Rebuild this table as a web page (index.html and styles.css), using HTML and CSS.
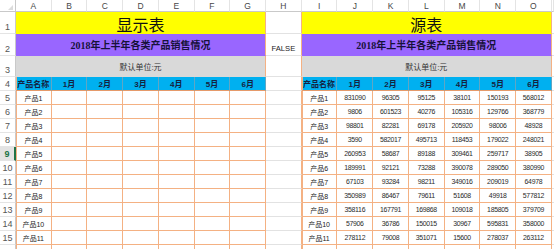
FILE: index.html
```html
<!DOCTYPE html>
<html lang="zh">
<head>
<meta charset="utf-8">
<title>显示表</title>
<link rel="stylesheet" href="styles.css">
</head>
<body>
<div class="sheet">
  <!-- column headers -->
  <div class="c ch corner"></div>
  <div class="c ch">A</div><div class="c ch">B</div><div class="c ch">C</div><div class="c ch">D</div><div class="c ch">E</div><div class="c ch">F</div><div class="c ch">G</div><div class="c ch">H</div><div class="c ch">I</div><div class="c ch">J</div><div class="c ch">K</div><div class="c ch">L</div><div class="c ch">M</div><div class="c ch">N</div><div class="c ch">O</div><div class="c ch"></div>

  <!-- row 1 -->
  <div class="c rh">1</div>
  <div class="c m title">显示表</div>
  <div class="c h"></div>
  <div class="c m title">源表</div>
  <div class="c x"></div>

  <!-- row 2 -->
  <div class="c rh">2</div>
  <div class="c m sub">2018年上半年各类产品销售情况</div>
  <div class="c h bool">FALSE</div>
  <div class="c m sub">2018年上半年各类产品销售情况</div>
  <div class="c x"></div>

  <!-- row 3 -->
  <div class="c rh">3</div>
  <div class="c m unit">默认单位:元</div>
  <div class="c h"></div>
  <div class="c m unit">默认单位:元</div>
  <div class="c x"></div>

  <!-- row 4 -->
  <div class="c rh">4</div>
  <div class="c t a hd">产品名称</div><div class="c t hd">1月</div><div class="c t hd">2月</div><div class="c t hd">3月</div><div class="c t hd">4月</div><div class="c t hd">5月</div><div class="c t hd">6月</div>
  <div class="c h"></div>
  <div class="c t a hd">产品名称</div><div class="c t hd">1月</div><div class="c t hd">2月</div><div class="c t hd">3月</div><div class="c t hd">4月</div><div class="c t hd">5月</div><div class="c t hd">6月</div>
  <div class="c x"></div>

  <!-- row 5 -->
  <div class="c rh">5</div>
  <div class="c t a pn">产品1</div><div class="c t"></div><div class="c t"></div><div class="c t"></div><div class="c t"></div><div class="c t"></div><div class="c t"></div>
  <div class="c h"></div>
  <div class="c t a pn">产品1</div><div class="c t n">831090</div><div class="c t n">96305</div><div class="c t n">95125</div><div class="c t n">38101</div><div class="c t n">150193</div><div class="c t n">568012</div>
  <div class="c x"></div>

  <!-- row 6 -->
  <div class="c rh">6</div>
  <div class="c t a pn">产品2</div><div class="c t"></div><div class="c t"></div><div class="c t"></div><div class="c t"></div><div class="c t"></div><div class="c t"></div>
  <div class="c h"></div>
  <div class="c t a pn">产品2</div><div class="c t n">9806</div><div class="c t n">601523</div><div class="c t n">40276</div><div class="c t n">105316</div><div class="c t n">129766</div><div class="c t n">368779</div>
  <div class="c x"></div>

  <!-- row 7 -->
  <div class="c rh">7</div>
  <div class="c t a pn">产品3</div><div class="c t"></div><div class="c t"></div><div class="c t"></div><div class="c t"></div><div class="c t"></div><div class="c t"></div>
  <div class="c h"></div>
  <div class="c t a pn">产品3</div><div class="c t n">98801</div><div class="c t n">82281</div><div class="c t n">69178</div><div class="c t n">205920</div><div class="c t n">98006</div><div class="c t n">48928</div>
  <div class="c x"></div>

  <!-- row 8 -->
  <div class="c rh">8</div>
  <div class="c t a pn">产品4</div><div class="c t"></div><div class="c t"></div><div class="c t"></div><div class="c t"></div><div class="c t"></div><div class="c t"></div>
  <div class="c h"></div>
  <div class="c t a pn">产品4</div><div class="c t n">3590</div><div class="c t n">582017</div><div class="c t n">495713</div><div class="c t n">118453</div><div class="c t n">179022</div><div class="c t n">248021</div>
  <div class="c x"></div>

  <!-- row 9 (selected row) -->
  <div class="c rh sel">9</div>
  <div class="c t a pn">产品5</div><div class="c t"></div><div class="c t"></div><div class="c t"></div><div class="c t"></div><div class="c t"></div><div class="c t"></div>
  <div class="c h"></div>
  <div class="c t a pn">产品5</div><div class="c t n">260953</div><div class="c t n">58687</div><div class="c t n">89188</div><div class="c t n">309461</div><div class="c t n">259717</div><div class="c t n">38905</div>
  <div class="c x"></div>

  <!-- row 10 -->
  <div class="c rh">10</div>
  <div class="c t a pn">产品6</div><div class="c t"></div><div class="c t"></div><div class="c t"></div><div class="c t"></div><div class="c t"></div><div class="c t"></div>
  <div class="c h"></div>
  <div class="c t a pn">产品6</div><div class="c t n">189991</div><div class="c t n">92121</div><div class="c t n">73288</div><div class="c t n">390078</div><div class="c t n">289050</div><div class="c t n">380990</div>
  <div class="c x"></div>

  <!-- row 11 -->
  <div class="c rh">11</div>
  <div class="c t a pn">产品7</div><div class="c t"></div><div class="c t"></div><div class="c t"></div><div class="c t"></div><div class="c t"></div><div class="c t"></div>
  <div class="c h"></div>
  <div class="c t a pn">产品7</div><div class="c t n">67103</div><div class="c t n">93284</div><div class="c t n">98211</div><div class="c t n">349016</div><div class="c t n">209019</div><div class="c t n">64978</div>
  <div class="c x"></div>

  <!-- row 12 -->
  <div class="c rh">12</div>
  <div class="c t a pn">产品8</div><div class="c t"></div><div class="c t"></div><div class="c t"></div><div class="c t"></div><div class="c t"></div><div class="c t"></div>
  <div class="c h"></div>
  <div class="c t a pn">产品8</div><div class="c t n">350989</div><div class="c t n">86467</div><div class="c t n">79611</div><div class="c t n">51608</div><div class="c t n">49918</div><div class="c t n">577812</div>
  <div class="c x"></div>

  <!-- row 13 -->
  <div class="c rh">13</div>
  <div class="c t a pn">产品9</div><div class="c t"></div><div class="c t"></div><div class="c t"></div><div class="c t"></div><div class="c t"></div><div class="c t"></div>
  <div class="c h"></div>
  <div class="c t a pn">产品9</div><div class="c t n">358116</div><div class="c t n">167791</div><div class="c t n">169868</div><div class="c t n">109018</div><div class="c t n">185805</div><div class="c t n">379709</div>
  <div class="c x"></div>

  <!-- row 14 -->
  <div class="c rh">14</div>
  <div class="c t a pn">产品10</div><div class="c t"></div><div class="c t"></div><div class="c t"></div><div class="c t"></div><div class="c t"></div><div class="c t"></div>
  <div class="c h"></div>
  <div class="c t a pn">产品10</div><div class="c t n">57906</div><div class="c t n">36786</div><div class="c t n">150015</div><div class="c t n">30967</div><div class="c t n">595831</div><div class="c t n">358000</div>
  <div class="c x"></div>

  <!-- row 15 -->
  <div class="c rh">15</div>
  <div class="c t a pn">产品11</div><div class="c t"></div><div class="c t"></div><div class="c t"></div><div class="c t"></div><div class="c t"></div><div class="c t"></div>
  <div class="c h"></div>
  <div class="c t a pn">产品11</div><div class="c t n">278112</div><div class="c t n">79008</div><div class="c t n">351071</div><div class="c t n">15600</div><div class="c t n">278037</div><div class="c t n">263112</div>
  <div class="c x"></div>

  <!-- row 16 (cut off by the window) -->
  <div class="c rh"></div>
  <div class="c t a"></div><div class="c t"></div><div class="c t"></div><div class="c t"></div><div class="c t"></div><div class="c t"></div><div class="c t"></div>
  <div class="c h"></div>
  <div class="c t a"></div><div class="c t"></div><div class="c t"></div><div class="c t"></div><div class="c t"></div><div class="c t"></div><div class="c t"></div>
  <div class="c x"></div>
</div>
</body>
</html>
```

FILE: styles.css
```css
* {
  box-sizing: border-box;
  margin: 0;
  padding: 0;
}

html, body {
  background: #ffffff;
}

body {
  width: 554px;
  height: 249px;
  overflow: hidden;
  font-family: "Liberation Sans", "Noto Sans CJK SC", sans-serif;
  color: #222222;
}

.sheet {
  display: grid;
  grid-template-columns: 16px repeat(15, 35.73px) 1fr;
  grid-template-rows: 12px 22px 22px 21px 14px repeat(12, 14px);
}

.c {
  display: flex;
  align-items: center;
  justify-content: center;
  overflow: hidden;
  white-space: nowrap;
  border-right: 1px solid #e2e2e2;
  border-bottom: 1px solid #e2e2e2;
}

/* column header row */
.ch {
  font-size: 8.5px;
  color: #474747;
  border-bottom-color: #c9c9c9;
  border-right-color: #e4e4e4;
}

.corner {
  position: relative;
  border-right-color: #c9c9c9;
}

.corner::after {
  content: "";
  position: absolute;
  right: 2px;
  bottom: 1px;
  width: 0;
  height: 0;
  border-left: 5px solid transparent;
  border-bottom: 5px solid #dcdcdc;
}

/* row header column */
.rh {
  font-size: 9px;
  color: #555555;
  align-items: flex-end;
  padding-bottom: 1px;
  border-right-color: #c9c9c9;
  border-bottom-color: #e4e4e4;
}

.rh.sel {
  background: #e3e3e3;
  color: #217346;
  font-weight: bold;
  border-right: 2px solid #217346;
}

/* merged title cells */
.m {
  grid-column: span 7;
  border-right-color: #f4b183;
}

.title {
  background: #ffff00;
  border-bottom-color: #ffff00;
  font-family: "Noto Sans CJK SC", sans-serif;
  font-weight: 400;
  font-size: 16px;
  color: #111111;
  padding-top: 2px;
}

.sub {
  background: #9966ff;
  border-bottom-color: #9966ff;
  font-family: "Liberation Serif", "Noto Sans CJK SC", serif;
  font-weight: bold;
  font-size: 10px;
  color: #17123a;
}

.unit {
  background: #d9d9d9;
  border-bottom-color: #d9d9d9;
  font-size: 8px;
  color: #333333;
}

/* H column */
.h {
  border-right-color: #f4b183;
}

.bool {
  font-size: 7.6px;
  color: #222222;
  align-items: flex-end;
  padding-bottom: 2px;
}

/* right edge filler */
.x {
  border-right: 0;
}

/* table cells */
.t {
  border-right-color: #f4b183;
  border-bottom-color: #f4b183;
  font-size: 7px;
  color: #333333;
}

.a {
  box-shadow: inset 1px 0 0 #f4b183;
}

.hd {
  background: #00b0f0;
  font-weight: bold;
  font-size: 8px;
  color: #15223f;
  border-right-color: #5fa6c4;
  border-bottom-color: #e59a6a;
}

.pn {
  color: #222222;
}

.n {
  font-size: 6.9px;
  letter-spacing: -0.3px;
  color: #2a2a2a;
}
```
